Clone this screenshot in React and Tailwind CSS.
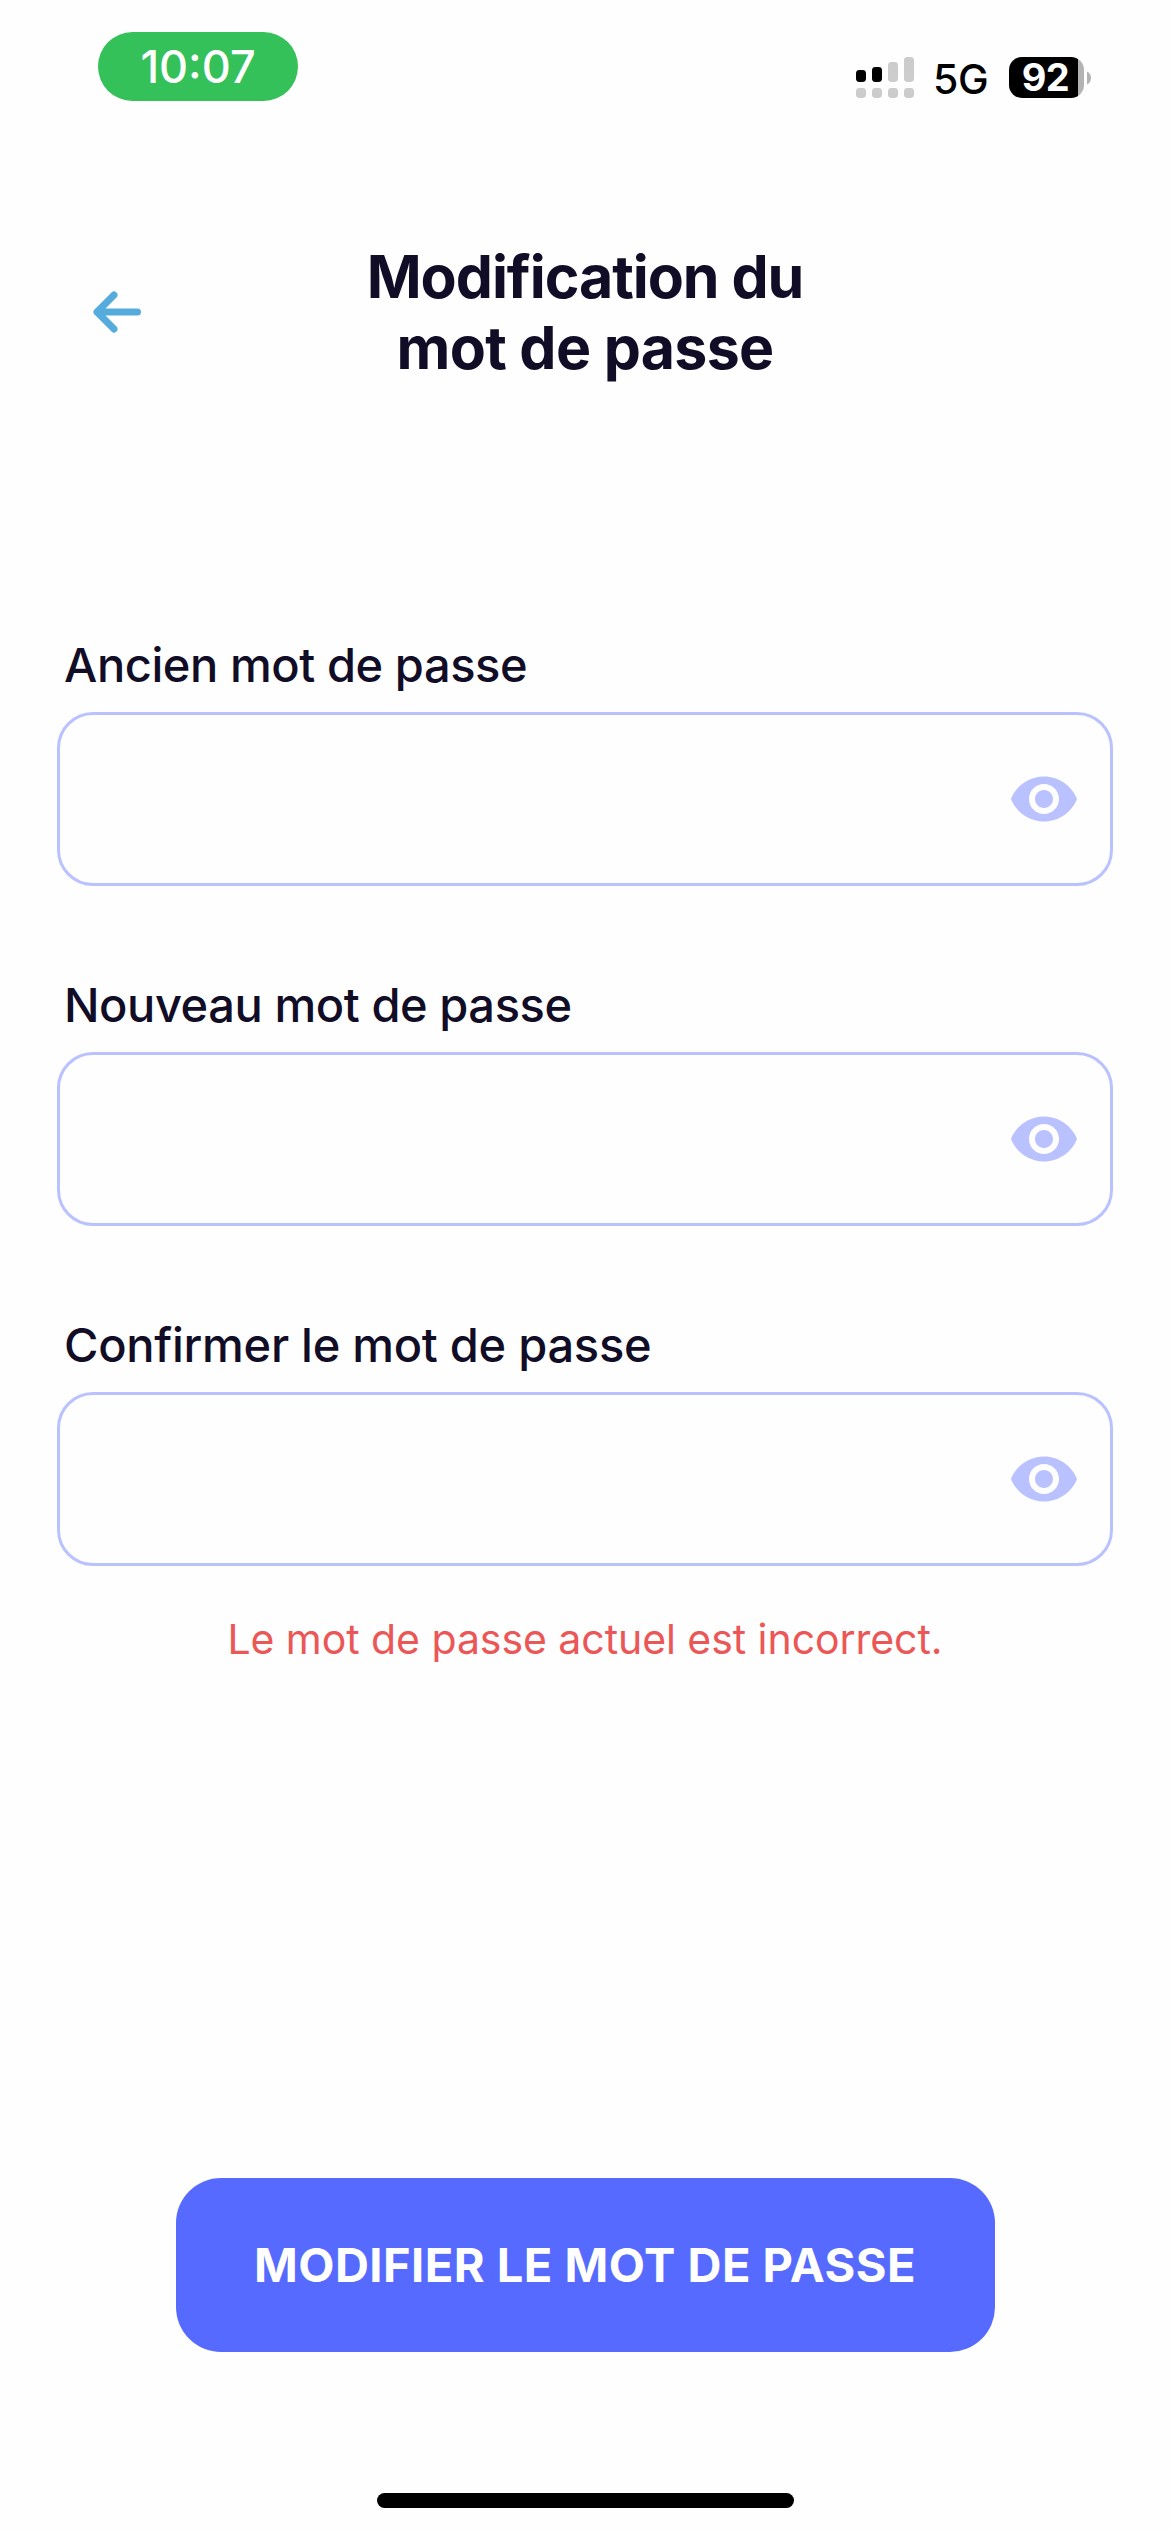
function SignalIcon() {
  const bars = [
    { x: 0, y: 13, h: 12, on: true },
    { x: 16, y: 10, h: 15, on: true },
    { x: 32, y: 5, h: 20, on: false },
    { x: 48, y: 0, h: 25, on: false },
  ];
  return (
    <svg width="58" height="41" viewBox="0 0 58 41" className="shrink-0">
      {bars.map((b) => (
        <g key={b.x}>
          <rect x={b.x} y={b.y} width="10" height={b.h} rx="3.4" fill={b.on ? "#000" : "#ccc"} />
          <rect x={b.x} y="31" width="10" height="10" rx="3.4" fill="#ccc" />
        </g>
      ))}
    </svg>
  );
}

function Battery() {
  return (
    <div className="flex items-center">
      <div className="flex h-[41px] w-[75px] items-center justify-center rounded-[13px] bg-[linear-gradient(to_right,#000_69px,#b3b3b3_69px)]">
        <span className="pr-[2px] text-[38px] leading-[41px] font-bold tracking-[-0.6px] text-white">92</span>
      </div>
      <svg width="4" height="14" viewBox="0 0 4 14" className="ml-[3px]">
        <path d="M0 0.5C2.4 1.6 4 4 4 7s-1.600 5.400-4 6.500z" fill="#b3b3b3" />
      </svg>
    </div>
  );
}

function StatusBar() {
  return (
    <div className="flex h-[101px] items-start justify-between pt-8 pr-[79px] pl-[98px]">
      <div className="flex h-[69px] w-[200px] items-center justify-center rounded-full bg-[#34c15a] text-[45px] leading-none font-medium text-white">
        10:07
      </div>
      <div className="mt-[25px] flex h-[41px] items-center">
        <SignalIcon />
        <span className="mt-[3px] ml-[19px] w-[76px] text-[41px] leading-[41px] font-medium tracking-[-0.3px] text-black">5G</span>
        <Battery />
      </div>
    </div>
  );
}

function Header() {
  return (
    <header className="mt-[140px] grid h-[142px] grid-cols-[200px_1fr_200px] items-center text-[#110d26]">
      <button type="button" aria-label="Retour" className="ml-[93px] w-12">
        <svg width="48" height="42" viewBox="0 0 48 42" fill="none" stroke="#55acdc" strokeWidth="7" strokeLinecap="round" strokeLinejoin="round">
          <path d="M44.500 21H4M21 4L4 21L21 38" />
        </svg>
      </button>
      <h1 className="text-center text-[59px] leading-[71px] font-bold">
        <span className="block tracking-[-1.04px]">Modification du</span>
        <span className="block tracking-[-0.68px]">mot de passe</span>
      </h1>
    </header>
  );
}

function EyeIcon() {
  return (
    <svg width="72" height="72" viewBox="0 0 24 24" fill="#b9c2ff">
      <path d="M12 4.500C7 4.500 2.730 7.610 1 12c1.730 4.390 6 7.500 11 7.500s9.270-3.110 11-7.500c-1.730-4.390-6-7.500-11-7.500zM12 17c-2.760 0-5-2.240-5-5s2.240-5 5-5 5 2.240 5 5-2.240 5-5 5zm0-8c-1.660 0-3 1.340-3 3s1.340 3 3 3 3-1.340 3-3-1.340-3-3-3z" />
    </svg>
  );
}

function PasswordField({ label, tracking }) {
  return (
    <label className="block">
      <span className={`block pl-[7px] text-[47px] leading-[58px] font-medium text-[#110d26] ${tracking}`}>
        {label}
      </span>
      <span className="mt-[18px] flex h-[174px] items-center rounded-[36px] border-3 border-[#b9c2ff] pr-[30px] pl-8">
        <input type="password" className="min-w-0 flex-1 bg-transparent text-[47px] outline-none" />
        <EyeIcon />
      </span>
    </label>
  );
}

export default function App() {
  return (
    <div className="flex h-[2532px] w-[1170px] flex-col bg-[#fefefe] font-[Inter,sans-serif]">
      <StatusBar />
      <Header />
      <main className="mt-[253px] flex flex-col gap-[90px] px-[57px]">
        <PasswordField label="Ancien mot de passe" tracking="tracking-[-0.43px]" />
        <PasswordField label="Nouveau mot de passe" tracking="tracking-[-0.43px]" />
        <PasswordField label="Confirmer le mot de passe" tracking="tracking-[-0.27px]" />
      </main>
      <p className="mt-12 text-center text-[41px] leading-[50px] tracking-[-0.06px] text-[#eb5757]">
        Le mot de passe actuel est incorrect.
      </p>
      <button type="button" className="mx-auto mt-[514px] h-[174px] w-[819px] rounded-[45px] bg-[#566aff] text-[47px] font-bold tracking-[0.49px] text-white">
        MODIFIER LE MOT DE PASSE
      </button>
      <div className="mx-auto mt-auto mb-6 h-[15px] w-[417px] rounded-full bg-black" />
    </div>
  );
}
